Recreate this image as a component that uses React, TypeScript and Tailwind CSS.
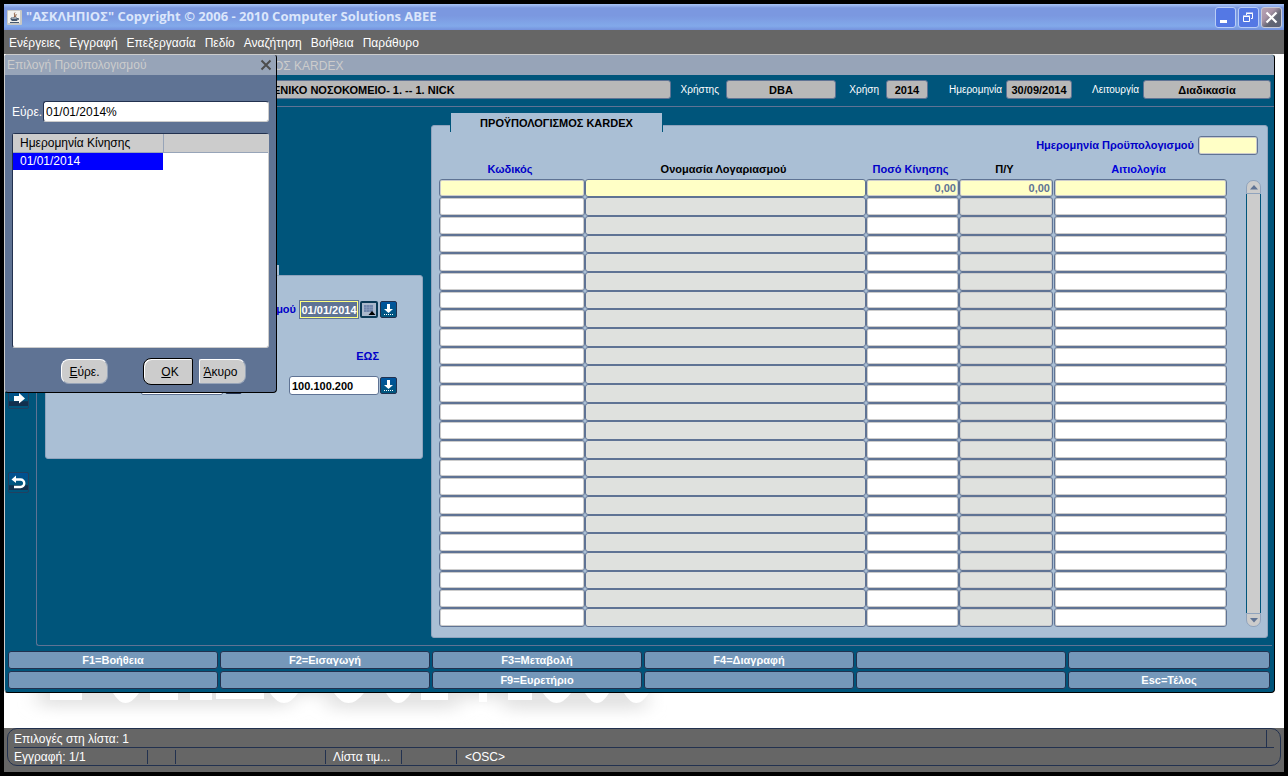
import type { ReactNode } from "react";

const menuItems = ["Ενέργειες", "Εγγραφή", "Επεξεργασία", "Πεδίο", "Αναζήτηση", "Βοήθεια", "Παράθυρο"];

const functionKeys = [
  ["F1=Βοήθεια", "F2=Εισαγωγή", "F3=Μεταβολή", "F4=Διαγραφή", "", ""],
  ["", "", "F9=Ευρετήριο", "", "", "Esc=Τέλος"],
];

const columns = [
  { title: "Κωδικός", width: "w-[146px]", color: "text-[#0000c8]", readOnly: false },
  { title: "Ονομασία Λογαριασμού", width: "", color: "text-black", readOnly: true },
  { title: "Ποσό Κίνησης", width: "w-[93px]", color: "text-[#0000c8]", readOnly: false },
  { title: "Π/Υ", width: "w-[95px]", color: "text-black", readOnly: true },
  { title: "Αιτιολογία", width: "w-[173px]", color: "text-[#0000dc]", readOnly: false },
];

const rows = Array.from({ length: 24 }, (_, i) => (i === 0 ? ["", "", "0,00", "0,00", ""] : ["", "", "", "", ""]));

const headerFields = [
  { id: "user", label: "Χρήστης", value: "DBA", labelWidth: "w-[55px] pr-[7px]", width: "w-[110px]" },
  { id: "year", label: "Χρήση", value: "2014", labelWidth: "w-[50px] pr-[7px]", width: "w-[42px]" },
  { id: "date", label: "Ημερομηνία", value: "30/09/2014", labelWidth: "w-[78px] pr-1", width: "w-[66px]" },
  { id: "mode", label: "Λειτουργία", value: "Διαδικασία", labelWidth: "w-[71px] pr-1", width: "w-[128px]" },
];

function TitleBar() {
  return (
    <header className="flex h-[26px] items-center bg-[linear-gradient(#a9c6f8_0,#7b98e0_15%,#7b98e0_45%,#82a9ea_85%,#7591dc_100%)] pl-[3px] pr-[2px]">
      <svg className="h-[15px] w-[15px] shrink-0" viewBox="0 0 15 15" aria-hidden="true">
        <rect width="15" height="15" rx="1" fill="#c9c9c4" />
        <rect x="1" y="1" width="12" height="12" fill="#f2f2ee" />
        <path d="M8 2.500C6 4.500 9 5 7 7.500M9.500 4C8.500 5 9 5.500 8.500 7" stroke="#8a5a3c" fill="none" />
        <path d="M4 8h6v1.500H4zM10 8.500h1.500V9.500L10 10M4.500 10.500h5.500M3 12.500h9" stroke="#44586e" fill="none" />
      </svg>
      <h1 className="ml-1 flex-1 truncate font-['Open_Sans',sans-serif] text-[13px] font-bold text-[#dbe6fb]">
        "ΑΣΚΛΗΠΙΟΣ" Copyright © 2006 - 2010 Computer Solutions ABEE
      </h1>
      <div className="flex gap-[2px]">
        <button aria-label="Ελαχιστοποίηση" className="flex h-[21px] w-[21px] items-center justify-center rounded-[3px] border border-[#b9cdf6] bg-[#5478e4]">
          <svg className="h-[19px] w-[19px] shrink-0" viewBox="0 0 19 19"><path d="M4 12h7v3H4z" fill="#fff" /></svg>
        </button>
        <button aria-label="Επαναφορά" className="flex h-[21px] w-[21px] items-center justify-center rounded-[3px] border border-[#b9cdf6] bg-[#5478e4]">
          <svg className="h-[19px] w-[19px] shrink-0" viewBox="0 0 19 19" fill="none" stroke="#fff">
            <path d="M4.500 8.500h6v5h-6zM4 8h7M7.500 7V5.500h6v5H12M7 5h7" />
          </svg>
        </button>
        <button aria-label="Κλείσιμο" className="flex h-[21px] w-[21px] items-center justify-center rounded-[3px] border border-[#c8cad6] bg-[linear-gradient(135deg,#b9a3b4_0,#a893a6_35%,#626673_60%,#5c6172_100%)]">
          <svg className="h-[19px] w-[19px] shrink-0" viewBox="0 0 19 19"><path d="M4.500 4.500l10 10M14.500 4.500l-10 10" stroke="#fff" strokeWidth="2.200" /></svg>
        </button>
      </div>
    </header>
  );
}

function DownButton({ label }: { label: string }) {
  return (
    <button aria-label={label} className="block h-[17px] w-[17px] shrink-0 rounded-[2px] border border-[#22314f] bg-[linear-gradient(#00559f,#00557b)]">
      <svg className="h-[15px] w-[15px]" viewBox="0 0 15 15">
        <path d="M6 2h3v5h3L7.500 11 3 7h3z" fill="#fff" />
        <path d="M3 12.500h10" stroke="#fff" strokeDasharray="1 1" />
      </svg>
    </button>
  );
}

function SideButton({ label, children }: { label: string; children: ReactNode }) {
  return (
    <button aria-label={label} className="h-[21px] w-[21px] rounded-[2px] border border-[#22405f] bg-[linear-gradient(#005093_0,#00557b_65%,#12304e_66%,#12304e_90%,#00557b_91%)]">
      <svg className="h-[19px] w-[19px]" viewBox="0 0 19 19">{children}</svg>
    </button>
  );
}

function CriteriaPanel() {
  return (
    <section className="w-[378px] shrink-0 pt-[158px]">
      <div className="-mb-[7px] ml-5 h-[17px] w-[215px] border-r border-[#00557b] bg-[#aabfd5]" />
      <div className="flex h-[184px] flex-col items-end rounded-[3px] border border-[#8fa3bd] bg-[#aabfd5] pr-[25px] pt-[25px]">
        <div className="flex items-center">
          <label htmlFor="budget-date" className="mr-1 font-bold text-[#0000c8]">μού</label>
          <input id="budget-date" defaultValue="01/01/2014" className="mr-[1px] h-[17px] w-[58px] border border-[#ffff80] bg-[#5f7394] text-center font-bold text-white shadow-[0_0_0_1px_#5f7394]" />
          <button aria-label="Ημερολόγιο" className="ml-[1px] mr-[2px] flex h-[17px] w-[18px] shrink-0 items-center justify-center rounded-[2px] border-2 border-[#0b3a56] bg-[#a9b8cc]">
            <svg className="h-[13px] w-[14px] shrink-0" viewBox="0 0 14 13">
              <path d="M2 2h9v7H2z" fill="#6f86ac" />
              <path d="M2 4.500h9M2 6.500h9M4.500 2v7M7.500 2v7" stroke="#8ea1c0" strokeWidth="0.500" />
              <path d="M10 8l3.500 4h-7z" fill="#000" />
            </svg>
          </button>
          <DownButton label="Λίστα ημερομηνιών" />
        </div>
        <div className="mr-[18px] mt-7 h-5 font-bold leading-5 text-[#0000c8]">
          <label htmlFor="code-to">ΕΩΣ</label>
        </div>
        <div className="mt-[10px] flex items-center">
          <input aria-label="Από κωδικό" className="h-[19px] w-[82px] rounded-[2px] border border-[#5f7394] bg-white" />
          <div className="ml-[2px] mr-[47px]">
            <DownButton label="Λίστα από" />
          </div>
          <input id="code-to" defaultValue="100.100.200" className="mr-[1px] h-[19px] w-[90px] rounded-[3px] border border-[#5f7394] bg-white pl-[2px] font-bold text-black" />
          <DownButton label="Λίστα έως" />
        </div>
      </div>
    </section>
  );
}

function BudgetTable() {
  return (
    <table className="flex-1 table-fixed border-collapse">
      <thead>
        <tr className="h-[22px]">
          {columns.map((col) => (
            <th key={col.title} scope="col" className={`${col.width} ${col.color} p-0 pr-1 pt-[2px] font-bold`}>{col.title}</th>
          ))}
        </tr>
      </thead>
      <tbody>
        {rows.map((row, r) => (
          <tr key={r} className="h-[19px] nth-[3n+1]:h-[18px]">
            {row.map((value, c) => (
              <td key={c} className="h-[inherit] p-0 nth-4:pr-[1px]">
                <input
                  aria-label={`${columns[c].title} ${r + 1}`}
                  defaultValue={value}
                  readOnly={columns[c].readOnly}
                  className={`block h-[inherit] w-full rounded-[3px] border border-[#5f7394] px-[2px] text-right font-bold text-[#5f7394] ${
                    r === 0 ? "bg-[#ffffc6]" : columns[c].readOnly ? "bg-[#dfe1de]" : "bg-white"
                  } ${c === 1 ? "" : "shadow-[inset_0_0_0_1px_#cccccc]"}`}
                />
              </td>
            ))}
          </tr>
        ))}
      </tbody>
    </table>
  );
}

function ScrollBar() {
  return (
    <div className="ml-[19px] mt-[23px] flex w-[15px] flex-col">
      <button aria-label="Πάνω" className="flex h-[14px] items-center justify-center rounded-t-[7px] border border-[#8fa3bd] bg-[#cccccc]">
        <svg className="h-[5px] w-[8px]" viewBox="0 0 8 5"><path d="M4 0l4 4.500H0z" fill="#5f7394" /></svg>
      </button>
      <div className="flex-1 border-x border-[#00557b] bg-[#cccccc]" />
      <button aria-label="Κάτω" className="flex h-[14px] items-center justify-center rounded-b-[7px] border border-[#8fa3bd] bg-[#cccccc]">
        <svg className="h-[5px] w-[8px]" viewBox="0 0 8 5"><path d="M4 4.500L8 0H0z" fill="#5f7394" /></svg>
      </button>
    </div>
  );
}

function BudgetPanel() {
  return (
    <section className="ml-2 flex-1 pt-[6px]">
      <h2 className="relative -mb-[7px] ml-[19px] h-[19px] w-[213px] border-x border-[#00557b] bg-[#aabfd5] text-center font-bold leading-[20px] text-black">
        ΠΡΟΫΠΟΛΟΓΙΣΜΟΣ KARDEX
      </h2>
      <div className="rounded-[3px] border border-[#8fa3bd] bg-[#aabfd5] pb-[10px] pl-[7px] pr-[6px] pt-[10px]">
        <div className="flex items-center justify-end pr-[3px]">
          <label htmlFor="budget" className="mr-1 font-bold text-[#0000c8]">Ημερομηνία Προϋπολογισμού</label>
          <input id="budget" className="h-[19px] w-[60px] rounded-[3px] border border-[#5f7394] bg-[#ffffc6] shadow-[inset_0_0_0_1px_#cccccc]" />
        </div>
        <div className="mt-[2px] flex">
          <BudgetTable />
          <ScrollBar />
        </div>
      </div>
    </section>
  );
}

function MainWindow() {
  return (
    <div className="relative mr-[9px] rounded-[4px] border-b border-l border-r border-t border-b-black border-l-[#cccccc] border-r-black border-t-[#cccccc] bg-[#00557b]">
      <h2 className="h-5 rounded-tr-[3px] bg-[#97a4b8] pl-[269px] text-[12px] leading-[22px] text-[#cccccc]">ΟΣ KARDEX</h2>
      <div className="flex border-b border-[#5f7394] pb-[7px] pl-1 pr-[3px] pt-[5px]">
        <input aria-label="Νοσοκομείο" readOnly defaultValue="ΕΝΙΚΟ ΝΟΣΟΚΟΜΕΙΟ- 1. -- 1. NICK" className="h-[19px] flex-1 rounded-[3px] border border-[#5f7394] bg-[#b8b8b8] pl-[263px] font-bold text-black" />
        {headerFields.map((f) => (
          <div key={f.id} className="flex items-center">
            <label htmlFor={f.id} className={`${f.labelWidth} text-right text-[10px] text-white`}>{f.label}</label>
            <input id={f.id} readOnly defaultValue={f.value} className={`${f.width} h-[19px] rounded-[3px] border border-[#5f7394] bg-[#b8b8b8] text-center font-bold text-black`} />
          </div>
        ))}
      </div>
      <div className="flex">
        <nav className="flex w-[31px] shrink-0 flex-col gap-[63px] pl-[3px] pt-[281px]">
          <SideButton label="Επόμενο">
            <path d="M5 7h5V4l6 5.500-6 5V12H5z" fill="#fff" />
          </SideButton>
          <SideButton label="Επιστροφή">
            <path d="M5 6.500h6.500a3.500 3.500 0 010 7.500H5" stroke="#fff" strokeWidth="2.400" fill="none" />
            <path d="M7 2.500v7.500L2.500 6.500z" fill="#fff" />
          </SideButton>
        </nav>
        <div className="mr-[2px] flex flex-1 rounded-bl-[3px] border-b border-l border-[#5f7394] pb-[7px] pl-2 pr-1">
          <CriteriaPanel />
          <BudgetPanel />
        </div>
      </div>
      <div className="flex flex-col gap-[2px] pb-[3px] pl-[3px] pr-1 pt-[5px]">
        {functionKeys.map((keys, r) => (
          <div key={r} className="grid grid-cols-[210fr_210fr_210fr_210fr_210fr_202fr] gap-[2px]">
            {keys.map((key, c) => (
              <button key={c} className="h-[18px] rounded-[3px] border border-[#22314f] bg-[#7598ba] text-center font-bold leading-4 text-white">{key}</button>
            ))}
          </div>
        ))}
      </div>
    </div>
  );
}

function PickerDialog() {
  return (
    <div role="dialog" aria-labelledby="picker-title" className="absolute left-0 top-0 w-[273px] rounded-[4px] border border-b-black border-l-[#cccccc] border-r-black border-t-[#cccccc] bg-[#5f7394] pb-[7px] text-[12px]">
      <div className="flex h-5 items-center justify-between rounded-tr-[3px] bg-[#97a4b8] pl-[2px] pr-1">
        <h2 id="picker-title" className="leading-[22px] text-[#cccccc]">Επιλογή Προϋπολογισμού</h2>
        <button aria-label="Κλείσιμο">
          <svg className="h-3 w-3" viewBox="0 0 12 12"><path d="M1.500 1.500l9 9M10.500 1.500l-9 9" stroke="#4d4d4d" strokeWidth="2" /></svg>
        </button>
      </div>
      <div className="flex items-center pl-[7px] pr-[7px] pt-[26px]">
        <label htmlFor="find" className="w-[31px] text-white">Εύρε.</label>
        <input id="find" defaultValue="01/01/2014%" className="h-[21px] flex-1 rounded-[3px] border border-b-[#cccccc] border-l-[#22314f] border-r-[#cccccc] border-t-[#22314f] bg-white pl-[2px] text-black" />
      </div>
      <div className="mx-[7px] mt-[11px] h-[215px] rounded-[3px] border border-b-[#cccccc] border-l-[#22314f] border-r-[#cccccc] border-t-[#22314f] bg-white">
        <table className="w-full border-collapse text-left">
          <thead>
            <tr className="h-[18px] bg-[#cccccc]">
              <th scope="col" className="w-[150px] border-b border-r border-[#97a4b8] p-0 pl-[7px] font-normal leading-4 text-black">Ημερομηνία Κίνησης</th>
              <th className="border-b border-[#97a4b8] p-0" />
            </tr>
          </thead>
          <tbody>
            <tr className="h-[18px]">
              <td className="bg-[#0000ff] p-0 pl-[7px] leading-4 text-white">01/01/2014</td>
              <td className="p-0" />
            </tr>
          </tbody>
        </table>
      </div>
      <div className="flex items-center pl-14 pt-[10px] text-black">
        <button className="h-[25px] w-[47px] rounded-[8px] border border-b-[#97a4b8] border-l-white border-r-[#97a4b8] border-t-white bg-[#cccccc]"><u>Ε</u>ύρε.</button>
        <button className="ml-[35px] h-[27px] w-[50px] rounded-l-[8px] rounded-r-[2px] border border-black bg-[#cccccc] pl-1 shadow-[inset_1px_1px_0_#fff]"><u>O</u>K</button>
        <button className="ml-[6px] h-[25px] w-[47px] rounded-l-[2px] rounded-r-[8px] border border-b-[#97a4b8] border-l-white border-r-[#97a4b8] border-t-white bg-[#cccccc] pr-1"><u>Ά</u>κυρο</button>
      </div>
    </div>
  );
}

// bottoms of the embossed wallpaper lettering, the rest sits behind the window
function Wallpaper() {
  return (
    <svg className="block h-[35px] w-[700px]" viewBox="0 0 700 35" aria-hidden="true">
      <defs>
        <filter id="soft" filterUnits="userSpaceOnUse" x="-20" y="-60" width="740" height="140">
          <feGaussianBlur stdDeviation="10 7" />
        </filter>
      </defs>
      <g filter="url(#soft)" fill="#e3e3e3">
        <rect x="34" y="-20" width="254" height="34" />
        <rect x="286" y="-20" width="40" height="22" />
        <rect x="324" y="-20" width="130" height="36" />
        <rect x="452" y="-20" width="50" height="26" />
        <rect x="500" y="-20" width="142" height="37" />
      </g>
      <g fill="#fff">
        <path d="M46 0h32v7H46zM146 0h28v7h-28zM186 0h22v7h-22zM212 0h48v6h-48zM417 0h27v7h-27zM475 0h8v9h-8zM504 0h24v7h-24z" />
        <path d="M109 0q12 20 26 0zM266 0q14 20 28 0zM330 0q14 20 30 0zM382 0q12 20 25 0zM539 0q13 20 28 0zM581 0q12 20 24 0zM620 0q12 20 25 0z" />
      </g>
    </svg>
  );
}

function StatusBar() {
  return (
    <footer className="bg-[#666666] pb-[6px] pl-[3px] pr-[3px] text-[12px] text-white">
      <div className="rounded-[10px] border border-[#22314f] px-[6px]">
        <div className="flex h-[19px] border-b border-[#22314f]">
          <p className="flex-1 leading-5">Επιλογές στη λίστα: 1</p>
          <div className="mr-[7px] mt-[1px] border-r border-[#22314f]" />
        </div>
        <div className="flex h-[17px] items-center leading-[14px]">
          <span className="w-[134px] border-r border-[#22314f]">Εγγραφή: 1/1</span>
          <span className="h-[14px] w-7 border-r border-[#22314f]" />
          <span className="h-[14px] w-[150px] border-r border-[#22314f]" />
          <span className="w-[76px] border-r border-[#22314f] pl-[7px]">Λίστα τιμ...</span>
          <span className="h-[14px] w-[55px] border-r border-[#22314f]" />
          <span className="pl-2">&lt;OSC&gt;</span>
        </div>
      </div>
    </footer>
  );
}

export default function App() {
  return (
    <div className="flex min-h-screen flex-col bg-black p-1 font-['Liberation_Sans',Arial,sans-serif] text-[11px]">
      <TitleBar />
      <nav className="flex h-6 items-center gap-[9px] bg-[#666666] pl-[5px] pt-[2px] text-[12px] text-white">
        {menuItems.map((item) => (
          <button key={item}>{item}</button>
        ))}
      </nav>
      <main className="relative flex-1 bg-white">
        <MainWindow />
        <Wallpaper />
        <PickerDialog />
      </main>
      <StatusBar />
    </div>
  );
}
